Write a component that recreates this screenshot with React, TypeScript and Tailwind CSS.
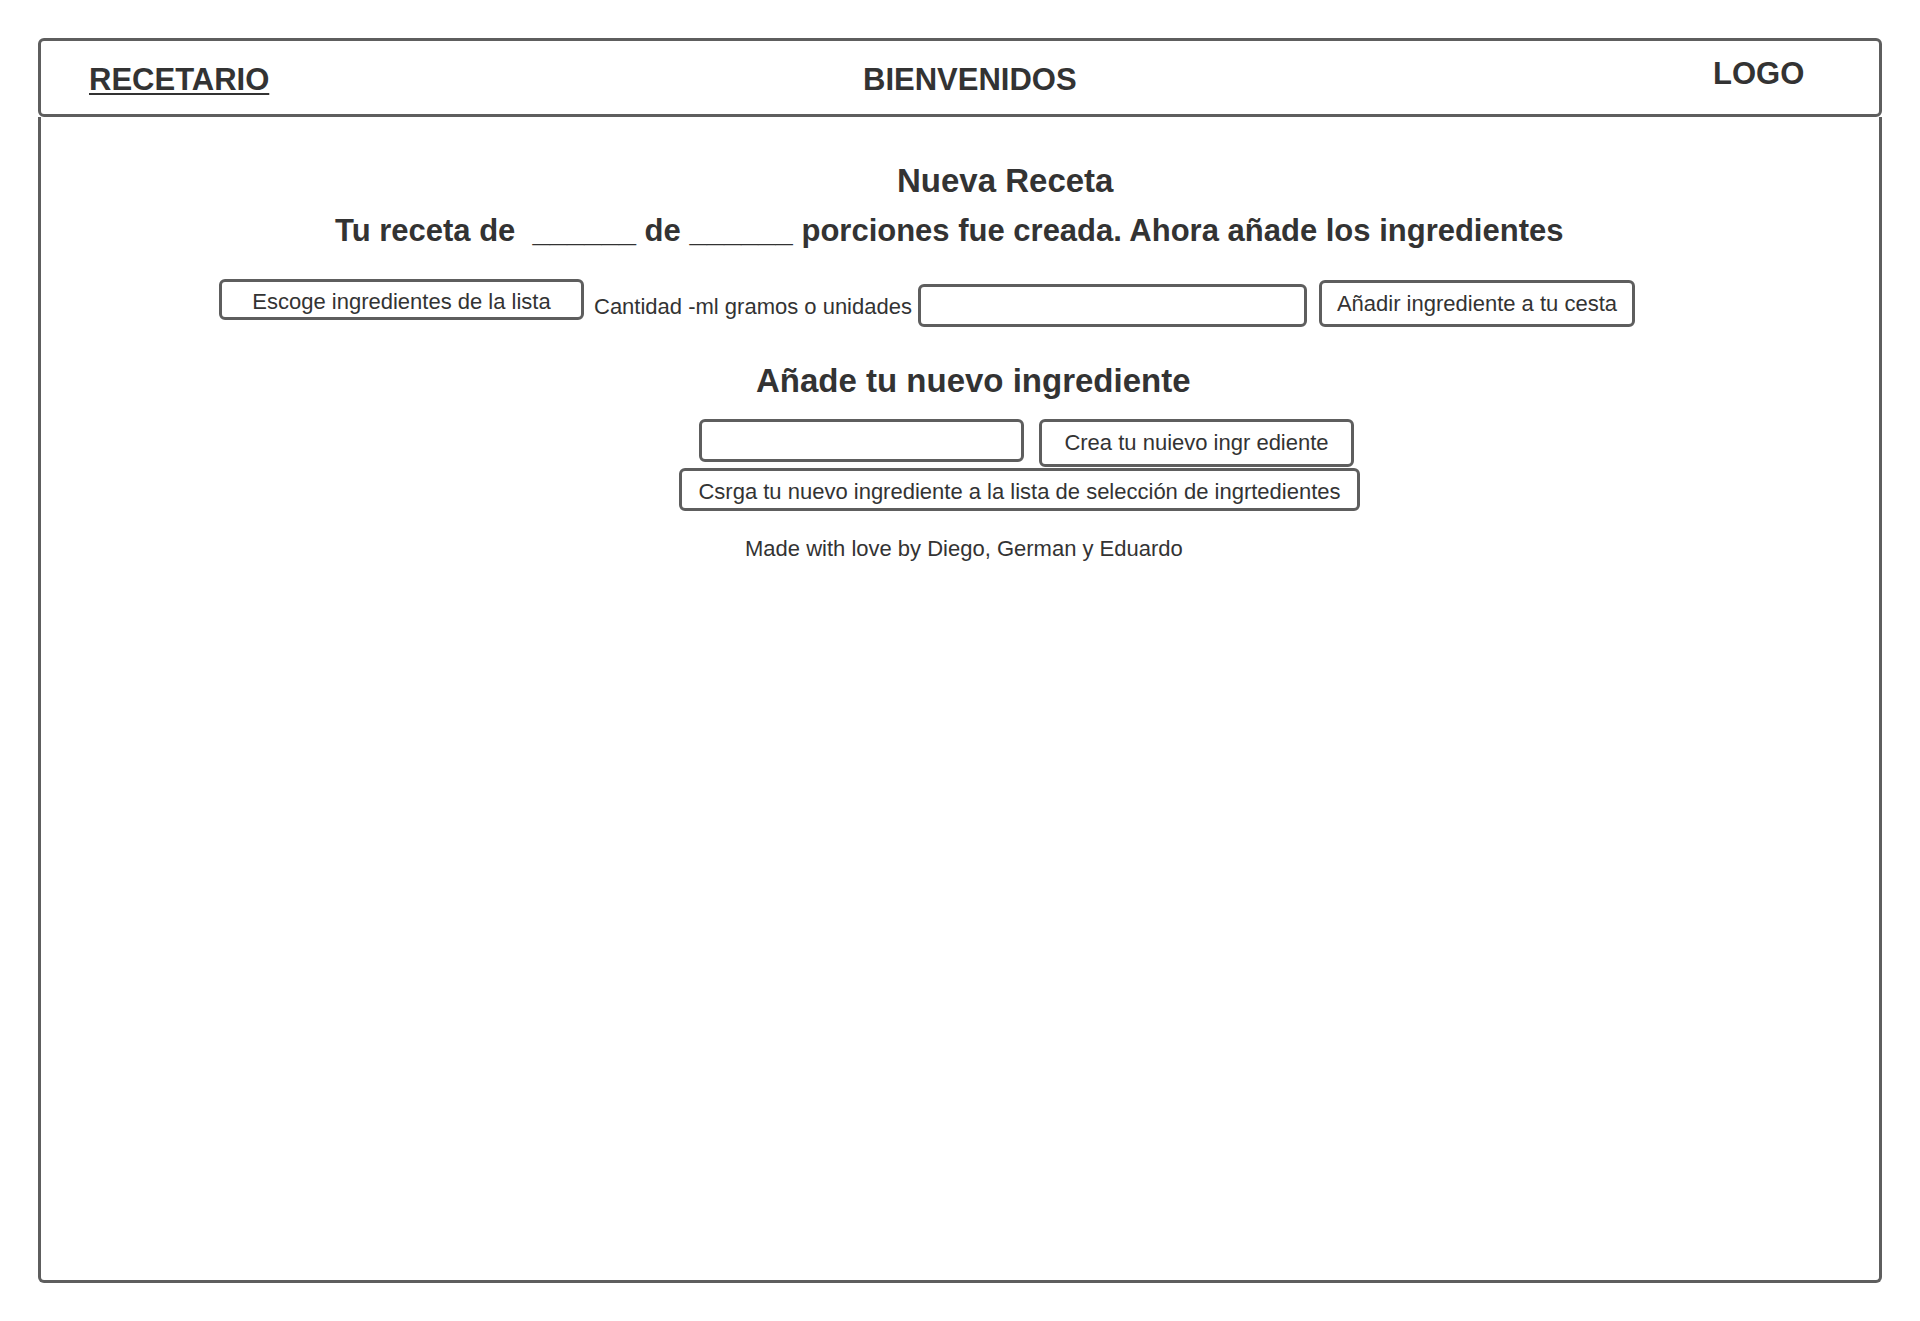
import React from 'react';

const box = 'border-[3px] border-[#5e5e5e] rounded-[6px] bg-white';

export default function App() {
  return (
    <div className="min-h-screen bg-white pt-[38px] pl-[38px] text-[#333333] font-['Liberation_Sans',Arial,sans-serif]">
      <div className="w-[1844px]">
        {/* Header */}
        <header className="h-[79px] border-[3px] border-[#5e5e5e] rounded-[6px] grid grid-cols-[822px_850px_1fr] text-[31px] font-bold leading-none">
          <a href="#" className="mt-[23px] pl-[48px] underline decoration-[2px] underline-offset-[3px]">
            RECETARIO
          </a>
          <div className="mt-[23px]">BIENVENIDOS</div>
          <div className="mt-[17px]">LOGO</div>
        </header>

        {/* Body */}
        <main className="h-[1166px] border-[3px] border-t-0 border-[#5e5e5e] rounded-b-[6px] flex flex-col items-start">
          <h1 className="mt-[47px] ml-[856px] text-[33px] font-bold leading-none">Nueva Receta</h1>
          <h2 className="mt-[18px] ml-[294px] text-[31px] font-bold leading-none whitespace-pre">
            Tu receta de  ______ de ______ porciones fue creada. Ahora añade los ingredientes
          </h2>

          <div className="mt-[33px] ml-[178px] flex items-start text-[22px] leading-none">
            <button className={`${box} w-[365px] h-[41px] pt-[5px]`}>Escoge ingredientes de la lista</button>
            <label className="ml-[10px] mt-[17px] whitespace-nowrap">Cantidad -ml gramos o unidades</label>
            <input type="text" className={`${box} ml-[6px] mt-[5px] w-[389px] h-[43px] px-2 outline-none`} />
            <button className={`${box} ml-[12px] mt-[1px] w-[316px] h-[47px]`}>Añadir ingrediente a tu cesta</button>
          </div>

          <h2 className="mt-[37px] ml-[715px] text-[33px] font-bold leading-none">Añade tu nuevo ingrediente</h2>

          <div className="mt-[22px] ml-[658px] flex items-start text-[22px] leading-none">
            <input type="text" className={`${box} w-[325px] h-[43px] px-2 outline-none`} />
            <button className={`${box} ml-[15px] w-[315px] h-[48px]`}>Crea tu nuievo ingr ediente</button>
          </div>
          <button className={`${box} mt-[1px] ml-[638px] w-[681px] h-[43px] pt-[4px] text-[22px] leading-none`}>
            Csrga tu nuevo ingrediente a la lista de selección de ingrtedientes
          </button>

          <p className="mt-[27px] ml-[704px] text-[22px] leading-none">Made with love by Diego, German y Eduardo</p>
        </main>
      </div>
    </div>
  );
}
